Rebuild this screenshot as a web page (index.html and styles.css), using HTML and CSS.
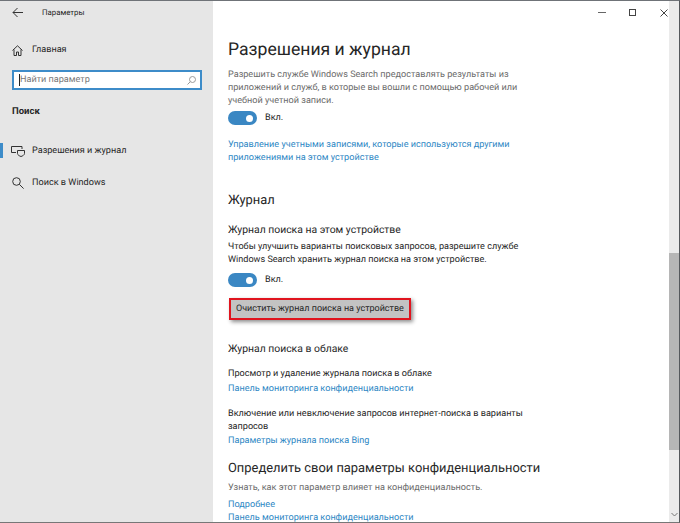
FILE: index.html
```html
<!DOCTYPE html>
<html lang="ru">
<head>
<meta charset="utf-8">
<title>Параметры</title>
<link rel="stylesheet" href="styles.css">
</head>
<body>
<div class="window">
  <aside class="sidebar">
    <div class="titlebar">
      <svg class="back" width="12" height="12" viewBox="0 0 12 12"><path d="M5.500 1 1 5.500 5.500 10M1 5.500h10" fill="none" stroke="#333" stroke-width="1"/></svg>
      <span class="apptitle">Параметры</span>
    </div>
    <div class="nav home">
      <svg class="navicon" width="11" height="11" viewBox="0 0 11 11"><path d="M.5 5.500 5.500.8l5 4.700M2 4.500v6h2.500V7h2v3.500H9v-6" fill="none" stroke="#333" stroke-width="1"/></svg>
      <span>Главная</span>
    </div>
    <div class="search">
      <span class="caret"></span><span class="placeholder">Найти параметр</span>
      <svg class="searchicon" width="9" height="9" viewBox="0 0 9 9"><circle cx="5.500" cy="3.500" r="3" fill="none" stroke="#9a9a9a"/><path d="M3.300 5.700 .5 8.500" stroke="#9a9a9a"/></svg>
    </div>
    <div class="section">Поиск</div>
    <div class="nav item active">
      <svg class="navicon" width="14" height="11" viewBox="0 0 14 11"><path d="M5 6.500H.5V.5H11V3" fill="none" stroke="#333"/><path d="M6.500 4.500h7v3c0 1.500-2 2.500-3.500 3-1.500-.5-3.500-1.500-3.500-3z" fill="none" stroke="#333"/></svg>
      <span>Разрешения и журнал</span>
    </div>
    <div class="nav item">
      <svg class="navicon search-nav" width="12" height="12" viewBox="0 0 12 12"><circle cx="4.500" cy="4.500" r="3.800" fill="none" stroke="#333"/><path d="m7.300 7.300 4.300 4.300" stroke="#333"/></svg>
      <span>Поиск в Windows</span>
    </div>
  </aside>
  <main class="main">
    <div class="controls">
      <svg width="8" height="8" viewBox="0 0 8 8"><path d="M0 3.500h8" stroke="#666"/></svg>
      <svg width="8" height="8" viewBox="0 0 8 8"><rect x=".5" y=".5" width="6" height="6" fill="none" stroke="#444"/></svg>
      <svg width="8" height="8" viewBox="0 0 8 8"><path d="m.5.500 7 7M7.500.500l-7 7" stroke="#444"/></svg>
    </div>
    <div class="content">
      <h1>Разрешения и журнал</h1>
      <p class="text muted first">Разрешить службе Windows Search предоставлять результаты из<br>приложений и служб, в которые вы вошли с помощью рабочей или<br>учебной учетной записи.</p>
      <div class="toggle-row t1"><span class="toggle"></span><span>Вкл.</span></div>
      <a class="link l1">Управление учетными записями, которые используются другими<br>приложениями на этом устройстве</a>
      <h2 class="h-journal">Журнал</h2>
      <h3 class="h-device">Журнал поиска на этом устройстве</h3>
      <p class="text p2">Чтобы улучшить варианты поисковых запросов, разрешите службе<br>Windows Search хранить журнал поиска на этом устройстве.</p>
      <div class="toggle-row t2"><span class="toggle"></span><span>Вкл.</span></div>
      <div class="btn">Очистить журнал поиска на устройстве</div>
      <h3 class="h-cloud">Журнал поиска в облаке</h3>
      <p class="text p3">Просмотр и удаление журнала поиска в облаке</p>
      <a class="link l3">Панель мониторинга конфиденциальности</a>
      <p class="text p4">Включение или невключение запросов интернет-поиска в варианты<br>запросов</p>
      <a class="link l4">Параметры журнала поиска Bing</a>
      <h2 class="h-priv">Определить свои параметры конфиденциальности</h2>
      <p class="text muted p5">Узнать, как этот параметр влияет на конфиденциальность.</p>
      <a class="link l5">Подробнее</a>
      <a class="link l6">Панель мониторинга конфиденциальности</a>
    </div>
    <div class="scrollbar">
      <div class="thumb"></div>
      <svg class="arrow" width="7" height="5" viewBox="0 0 7 5"><path d="m.5 1 3 3 3-3" fill="none" stroke="#777"/></svg>
    </div>
  </main>
</div>
</body>
</html>
```
FILE: styles.css
```css
* { box-sizing: border-box; }
html, body { margin: 0; padding: 0; }
body {
  width: 680px; height: 523px; overflow: hidden;
  font-family: Roboto, "Open Sans", sans-serif;
  text-rendering: geometricPrecision;
  font-size: 9.100px; color: #262626; background: #fff;
}
.window {
  width: 680px; height: 523px; display: flex; overflow: hidden;
  border-top: 1px solid #6f7378; border-right: 1px solid #55585c; border-bottom: 1px solid #777;
}
.sidebar { width: 213px; flex: none; background: #e6e6e6; display: flex; flex-direction: column; }
.titlebar { height: 23px; display: flex; align-items: center; padding-left: 12px; }
.back { flex: none; }
.apptitle { margin-left: 18px; font-size: 7.800px; }
.nav { display: flex; align-items: center; font-size: 9.100px; }
.home { height: 20px; margin-top: 16px; padding-left: 12px; }
.home .navicon { margin-right: 9px; }
.search {
  height: 20px; margin: 10px 11px 0 12px; border: 2px solid #3d8cc9; background: #fff;
  display: flex; align-items: center; padding-left: 5px;
}
.caret { width: 1px; height: 12px; background: #222; flex: none; }
.placeholder { color: #777; font-size: 9.100px; flex: 1; }
.searchicon { margin-right: 4px; }
.section { font-weight: 700; font-size: 9.500px; margin: 14px 0 0 12px; height: 16px; line-height: 16px; }
.item { height: 32px; padding-left: 8px; border-left: 3px solid transparent; }
.item .navicon { margin-right: 7px; flex: none; }
.item .search-nav { margin-left: 1px; margin-right: 8px; }
.item.active { margin-top: 15px; position: relative; }
.item.active::before { content: ""; position: absolute; left: -3px; top: 8px; height: 15px; width: 3px; background: #3d8cc9; }
.main { flex: 1; position: relative; display: flex; min-width: 0; overflow: hidden; }
.controls { position: absolute; top: 8px; right: 11px; display: flex; gap: 23px; }
.content { flex: 1; padding: 0 0 0 15px; overflow: hidden; }
.scrollbar { width: 10px; flex: none; background: #ebebeb; position: relative; }
.thumb { position: absolute; top: 252px; height: 197px; width: 100%; background: #b6b6b6; }
.arrow { position: absolute; bottom: 5px; left: 2px; }
h1, h2, h3, p { margin: 0; font-weight: 400; }
h1 { font-size: 17.600px; line-height: 26px; margin-top: 36px; }
.text { font-size: 9.100px; line-height: 13px; }
.muted { color: #6b6b6b; }
.first { margin-top: 6px; }
.toggle-row { display: flex; align-items: center; gap: 8px; font-size: 9.100px; height: 14px; }
.toggle { width: 29px; height: 14px; border-radius: 7px; background: #3a87c3; position: relative; display: block; }
.toggle::after { content: ""; position: absolute; right: 4px; top: 3.500px; width: 7px; height: 7px; border-radius: 50%; background: #fff; }
.t1 { margin-top: 3px; }
.link { display: block; color: #2d87c4; font-size: 9.100px; line-height: 13px; }
.l1 { margin-top: 14px; }
h2 { font-size: 12.900px; line-height: 20px; }
.h-journal { margin-top: 26px; }
h3 { font-size: 10.400px; line-height: 16px; }
.h-device { margin-top: 11px; }
.p2 { margin-top: 3px; }
.t2 { margin-top: 6px; }
.btn {
  width: 182px; height: 22px; margin: 11px 0 0 1px; background: #c3c3c3; border: 2px solid #e0141e;
  box-shadow: 2px 2px 4px rgba(0,0,0,.45); display: flex; align-items: center; padding-left: 5px; font-size: 9px; white-space: nowrap;
}
.h-cloud { margin-top: 21px; }
.p3 { margin-top: 11px; }
.l3 { margin-top: 2px; }
.p4 { margin-top: 12px; }
.l4 { margin-top: 1px; }
.h-priv { margin-top: 11px; white-space: nowrap; }
.p5 { margin-top: 3px; }
.l5 { margin-top: 4px; }
.l6 { margin-top: 0; }
```
